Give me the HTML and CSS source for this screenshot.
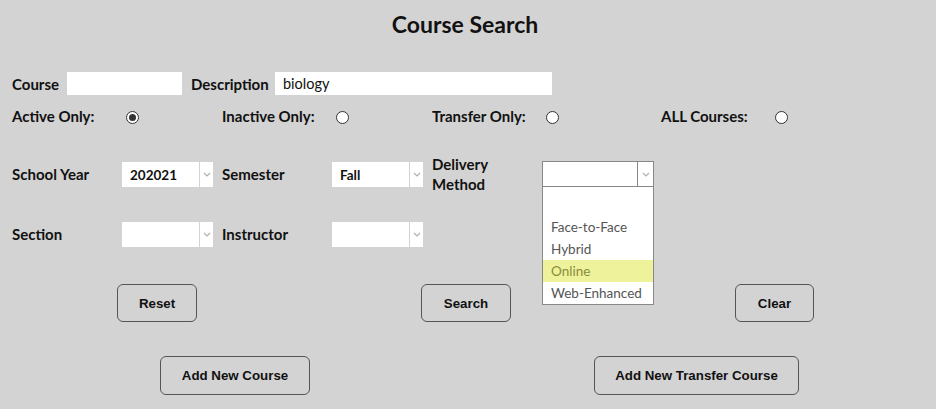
FILE: index.html
```html
<!DOCTYPE html>
<html>
<head>
<meta charset="utf-8">
<link rel="stylesheet" href="styles.css">
</head>
<body>
<h1 class="title">Course Search</h1>

<div class="row-text">
  <label class="lbl lbl-course">Course</label>
  <div class="textbox tb-course"></div>
  <label class="lbl lbl-desc">Description</label>
  <div class="textbox tb-desc">biology</div>
</div>

<div class="form-grid">
  <span class="lbl">Active Only:</span>
  <span class="radio-cell"><span class="radio checked"></span></span>
  <span class="lbl">Inactive Only:</span>
  <span class="radio-cell"><span class="radio"></span></span>
  <span class="lbl">Transfer Only:</span>
  <span class="radio-cell"><span class="radio"></span></span>
  <span class="lbl">ALL Courses:</span>
  <span class="radio-cell"><span class="radio"></span></span>

  <span class="lbl">School Year</span>
  <div class="select"><span class="val">202021</span><span class="arrow"><svg width="8" height="5" viewBox="0 0 8 5"><path d="M1 1l3 3 3-3" fill="none" stroke="#b0b0b0" stroke-width="1.2"/></svg></span></div>
  <span class="lbl">Semester</span>
  <div class="select"><span class="val">Fall</span><span class="arrow"><svg width="8" height="5" viewBox="0 0 8 5"><path d="M1 1l3 3 3-3" fill="none" stroke="#b0b0b0" stroke-width="1.2"/></svg></span></div>
  <span class="lbl lbl-two">Delivery<br>Method</span>
  <div class="dd-wrap">
    <div class="select select-open"><span class="val"></span><span class="arrow"><svg width="8" height="5" viewBox="0 0 8 5"><path d="M1 1l3 3 3-3" fill="none" stroke="#b0b0b0" stroke-width="1.2"/></svg></span></div>
    <ul class="dd-list">
      <li class="dd-item"></li>
      <li class="dd-item">Face-to-Face</li>
      <li class="dd-item">Hybrid</li>
      <li class="dd-item dd-hover">Online</li>
      <li class="dd-item">Web-Enhanced</li>
    </ul>
  </div>
  <span></span><span></span>

  <span class="lbl">Section</span>
  <div class="select"><span class="val"></span><span class="arrow"><svg width="8" height="5" viewBox="0 0 8 5"><path d="M1 1l3 3 3-3" fill="none" stroke="#b0b0b0" stroke-width="1.2"/></svg></span></div>
  <span class="lbl">Instructor</span>
  <div class="select"><span class="val"></span><span class="arrow"><svg width="8" height="5" viewBox="0 0 8 5"><path d="M1 1l3 3 3-3" fill="none" stroke="#b0b0b0" stroke-width="1.2"/></svg></span></div>
</div>

<div class="btn-row btn-row-1">
  <button class="btn btn-reset">Reset</button>
  <button class="btn btn-search">Search</button>
  <button class="btn btn-clear">Clear</button>
</div>

<div class="btn-row btn-row-2">
  <button class="btn btn-add">Add New Course</button>
  <button class="btn btn-transfer">Add New Transfer Course</button>
</div>
</body>
</html>
```

FILE: styles.css
```css
html, body {
  margin: 0;
  padding: 0;
  background: #d3d3d3;
}
body {
  padding-left: 12px;
  font-family: Lato, "Noto Sans", sans-serif;
  color: #111;
  width: 924px;
  height: 409px;
  overflow: hidden;
}
.title {
  margin: 0;
  padding-top: 10px;
  height: 72px;
  box-sizing: border-box;
  line-height: 28px;
  font-size: 23px;
  font-weight: 700;
  text-align: center;
  padding-right: 18px;
}
.lbl {
  font-size: 15px;
  font-weight: 700;
  line-height: 20px;
  white-space: nowrap;
}
.row-text {
  display: flex;
  align-items: center;
  height: 23px;
}
.lbl-course { width: 55px; }
.lbl-desc { width: 84px; }
.textbox {
  height: 23px;
  background: #fff;
  box-sizing: border-box;
  font-size: 14.5px;
  line-height: 23px;
  padding-left: 8px;
  color: #111;
}
.tb-course { width: 115px; margin-right: 9px; }
.tb-desc { width: 277px; }

.form-grid {
  display: grid;
  grid-template-columns: 110px 100px 110px 100px 110px 119px 110px 60px;
  grid-template-rows: 22px 42px 26px;
  row-gap: 26px;
  margin-top: 10px;
  align-items: center;
}
.radio-cell {
  display: flex;
  align-items: center;
  padding-left: 4px;
}
.radio {
  width: 11px;
  height: 11px;
  border: 1px solid #333;
  border-radius: 50%;
  background: #fff;
  position: relative;
  margin-top: 2px;
}
.radio.checked::after {
  content: "";
  position: absolute;
  left: 2px;
  top: 2px;
  width: 7px;
  height: 7px;
  border-radius: 50%;
  background: #333;
}
.select {
  display: flex;
  width: 91px;
  height: 25px;
  background: #fff;
  box-sizing: border-box;
}
.select .val {
  flex: 1;
  font-size: 13.5px;
  font-weight: 700;
  line-height: 27px;
  padding-left: 8px;
  border-right: 1px solid #d3d3d3;
}
.select .arrow {
  width: 13px;
  display: flex;
  align-items: center;
  justify-content: center;
}
.dd-wrap {
  position: relative;
  height: 26px;
}
.select-open {
  width: 112px;
  height: 26px;
  border: 1px solid #888;
}
.select-open .val { border-right: 1px solid #888; }
.select-open .arrow { width: 15px; }
.dd-list {
  position: absolute;
  left: 0;
  top: 26px;
  width: 112px;
  box-sizing: border-box;
  margin: 0;
  padding: 7px 0 0;
  list-style: none;
  background: #fff;
  border: 1px solid #888;
  border-top: none;
  z-index: 2;
}
.dd-item {
  height: 22px;
  line-height: 22px;
  font-size: 13.5px;
  padding-left: 8px;
  color: #555;
}
.dd-hover {
  background: #eef39b;
  color: #8a8c3c;
}

.btn-row {
  display: flex;
}
.btn {
  font-family: "Liberation Sans", Arial, sans-serif;
  font-weight: 700;
  font-size: 13.3px;
  color: #111;
  background: #d3d3d3;
  border: 1px solid #555;
  border-radius: 6px;
  padding: 0;
  height: 38px;
  box-sizing: border-box;
}
.btn-row-1 {
  margin-top: 37px;
  padding-left: 105px;
  gap: 224px;
}
.btn-reset { width: 80px; }
.btn-search { width: 90px; }
.btn-clear { width: 79px; }
.btn-row-2 {
  margin-top: 34px;
  padding-left: 148px;
  gap: 284px;
}
.btn-row-2 .btn { height: 39px; }
.btn-add { width: 150px; }
.btn-transfer { width: 205px; }
```
